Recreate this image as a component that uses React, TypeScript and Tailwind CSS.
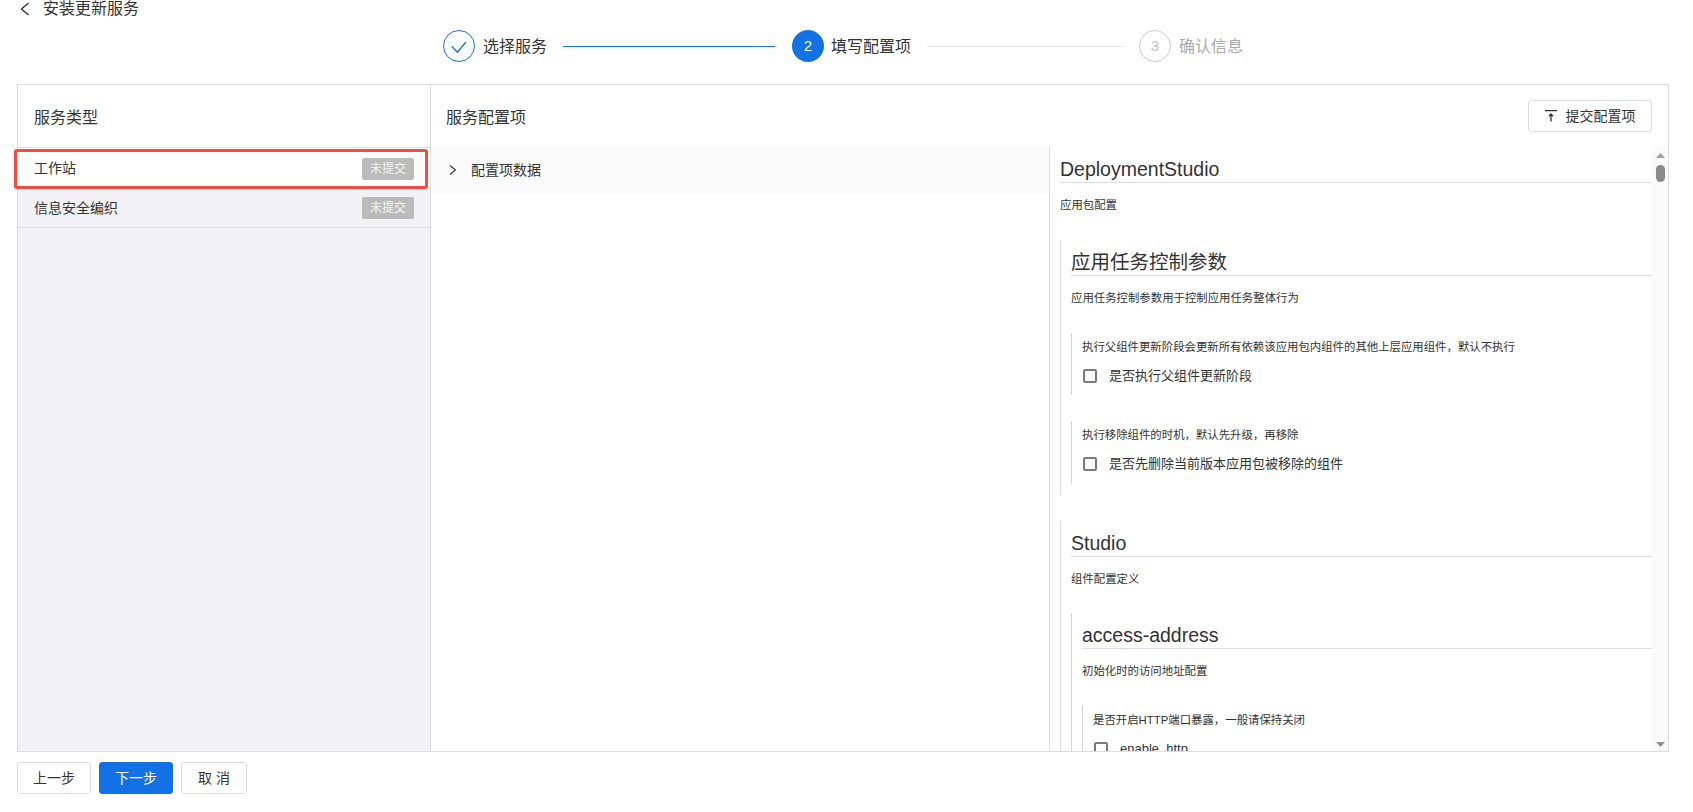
import * as React from "react";

const FONT = "font-['Liberation_Sans','Noto_Sans_CJK_SC',sans-serif]";

function Checkbox({ label }: { label: string }) {
  return (
    <div className="mt-[10px] flex h-5 items-center">
      <span className="ml-[1px] h-[14px] w-[14px] rounded-[2px] border-2 border-[#7a7a7a] bg-white" />
      <span className="ml-[12px] text-[13px] text-[#333]">{label}</span>
    </div>
  );
}

function Heading({ title, desc }: { title: string; desc: string }) {
  return (
    <>
      <h2 className="border-b border-[#ddd] pb-[1px] text-[19.5px] leading-[23px] font-normal text-[#333]">{title}</h2>
      <p className="mt-[13px] text-[11.4px] leading-[18px] text-[#333]">{desc}</p>
    </>
  );
}

function Step({ label, state, num, gap }: { label: string; state: "done" | "active" | "todo"; num: number; gap: string }) {
  return (
    <div className="flex items-center">
      {state === "done" && (
        <span className="flex h-8 w-8 items-center justify-center rounded-full border border-[#1271e4]">
          <svg width="16" height="16" viewBox="0 0 16 16" fill="none" stroke="#1271e4" strokeWidth="1.3">
            <path d="M0.7 8.2 L6.4 14.2 L15 4" />
          </svg>
        </span>
      )}
      {state === "active" && (
        <span className="flex h-8 w-8 items-center justify-center rounded-full bg-[#1271e4] text-[15px] text-white">{num}</span>
      )}
      {state === "todo" && (
        <span className="flex h-8 w-8 items-center justify-center rounded-full border border-[#ccc] text-[15px] text-[#c4c4c4]">{num}</span>
      )}
      <span className={`${gap} pt-[2px] text-[16px] ${state === "todo" ? "text-[#aaa]" : "text-[#333]"}`}>{label}</span>
    </div>
  );
}

function Button({ children, primary, className }: { children: React.ReactNode; primary?: boolean; className?: string }) {
  return (
    <button
      className={`flex h-8 items-center justify-center rounded-[3px] border text-[14px] ${
        primary ? "border-[#1271e4] bg-[#1271e4] text-white" : "border-[#ddd] bg-white text-[#333]"
      } ${className ?? ""}`}
    >
      {children}
    </button>
  );
}

export default function App() {
  return (
    <div className={`${FONT} h-[812px] w-full overflow-hidden bg-white px-[17px]`}>
      {/* back title */}
      <div className="flex h-[17px] items-center pl-[3px]">
        <svg width="10" height="14" viewBox="0 0 10 14" fill="none" stroke="#333" strokeWidth="1.4">
          <path d="M8.5 1 L1.5 7 L8.5 13" />
        </svg>
        <span className="ml-[13px] text-[16px] text-[#333]">安装更新服务</span>
      </div>

      {/* steps */}
      <div className="mt-[13px] ml-[426px] flex h-8 items-center">
        <Step label="选择服务" state="done" num={1} gap="ml-[8px]" />
        <div className="mr-[17px] ml-[16px] h-px w-[212px] bg-[#1271e4]" />
        <Step label="填写配置项" state="active" num={2} gap="ml-[7px]" />
        <div className="mx-[16px] h-px w-[196px] bg-[#e8e8e8]" />
        <Step label="确认信息" state="todo" num={3} gap="ml-[8px]" />
      </div>

      {/* panel */}
      <div className="mt-[22px] flex h-[668px] w-[1652px] border border-[#ddd]">
        <div className="flex w-[413px] flex-col border-r border-[#ddd] bg-[#f1f1f6]">
          <div className="flex h-[63px] items-center border-b border-[#ddd] bg-white pt-[4px] pl-4 text-[16px] text-[#333]">服务类型</div>
          <div className="relative flex h-[41px] items-center justify-between bg-white pr-[16px] pl-4 text-[14px] text-[#333]">
            工作站
            <span className="flex h-[22px] w-[52px] items-center justify-center rounded-[2px] bg-[#bbb] text-[12px] text-[#f4f4f4]">未提交</span>
            <div className="absolute top-[1px] right-[2px] bottom-0 -left-[4px] rounded-[3px] border-[3px] border-[#f44b3f]" />
          </div>
          <div className="flex h-[39px] items-center justify-between border-b border-[#ddd] pr-[16px] pl-4 text-[14px] text-[#333]">
            信息安全编织
            <span className="flex h-[22px] w-[52px] items-center justify-center rounded-[2px] bg-[#bbb] text-[12px] text-[#f4f4f4]">未提交</span>
          </div>
        </div>

        <div className="flex min-w-0 flex-1 flex-col">
          <div className="flex h-[62px] items-center justify-between pr-[16px] pl-[15px]">
            <span className="mt-[4px] text-[16px] text-[#333]">服务配置项</span>
            <Button className="w-[124px]">
              <svg width="12" height="12" viewBox="0 0 12 12" fill="none" stroke="#333" strokeWidth="1.3">
                <path d="M0 0.7 H12 M6 11.5 V4 M4 6.2 L6 4 L8 6.2" />
              </svg>
              <span className="ml-[9px]">提交配置项</span>
            </Button>
          </div>

          <div className="flex min-h-0 flex-1">
            <div className="w-[619px] border-r border-[#ddd]">
              <div className="flex h-[46px] items-center bg-[#fafafa] pl-[18px] text-[14px] text-[#333]">
                <svg width="8" height="10" viewBox="0 0 8 10" fill="none" stroke="#333" strokeWidth="1.1">
                  <path d="M1 0.5 L6.5 5 L1 9.5" />
                </svg>
                <span className="ml-[14px]">配置项数据</span>
              </div>
            </div>

            <div className="min-w-0 flex-1 overflow-hidden pl-[10px]">
              <div className="pt-[11px]">
                <Heading title="DeploymentStudio" desc="应用包配置" />
              </div>

              <section className="mt-[26px] border-l border-[#ddd] pt-[11px] pb-[11px] pl-[10px]">
                <Heading title="应用任务控制参数" desc="应用任务控制参数用于控制应用任务整体行为" />
                <div className="mt-[26px] h-[62px] border-l border-[#d4d4dc] pt-[5px] pl-[10px]">
                  <p className="text-[11.4px] leading-[18px] text-[#333]">执行父组件更新阶段会更新所有依赖该应用包内组件的其他上层应用组件，默认不执行</p>
                  <Checkbox label="是否执行父组件更新阶段" />
                </div>
                <div className="mt-[26px] h-[63px] border-l border-[#d4d4dc] pt-[5px] pl-[10px]">
                  <p className="text-[11.4px] leading-[18px] text-[#333]">执行移除组件的时机，默认先升级，再移除</p>
                  <Checkbox label="是否先删除当前版本应用包被移除的组件" />
                </div>
              </section>

              <section className="mt-[26px] border-l border-[#ddd] pt-[11px] pl-[10px]">
                <Heading title="Studio" desc="组件配置定义" />
                <div className="mt-[25px] border-l border-[#d4d4dc] pt-[11px] pl-[10px]">
                  <Heading title="access-address" desc="初始化时的访问地址配置" />
                  <div className="mt-[26px] border-l border-[#d4d4dc] pt-[5px] pl-[10px]">
                    <p className="text-[11.4px] leading-[18px] text-[#333]">是否开启HTTP端口暴露，一般请保持关闭</p>
                    <Checkbox label="enable_http" />
                  </div>
                </div>
              </section>
            </div>

            {/* scrollbar */}
            <div className="flex w-[16px] shrink-0 flex-col items-center justify-between bg-[#fafafa] pt-[6px] pb-[4px]">
              <div className="flex flex-col items-center">
                <svg width="9" height="5" viewBox="0 0 9 5"><path d="M4.5 0 L9 5 H0 Z" fill="#a3a3a3" /></svg>
                <div className="mt-[7px] h-[17px] w-[9px] rounded-full bg-[#8a8a8a]" />
              </div>
              <svg width="9" height="5" viewBox="0 0 9 5"><path d="M0 0 H9 L4.5 5 Z" fill="#8f8f8f" /></svg>
            </div>
          </div>
        </div>
      </div>

      {/* footer buttons */}
      <div className="mt-[10px] flex gap-[8px]">
        <Button className="w-[74px]">上一步</Button>
        <Button primary className="w-[74px]">下一步</Button>
        <Button className="w-[66px]">取 消</Button>
      </div>
    </div>
  );
}
